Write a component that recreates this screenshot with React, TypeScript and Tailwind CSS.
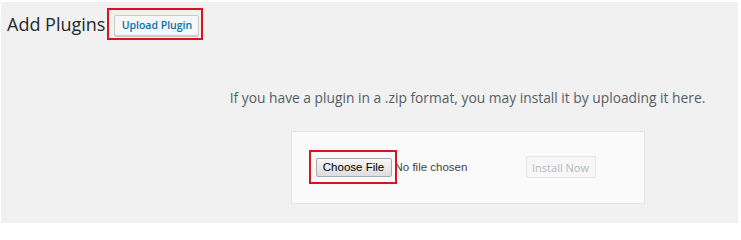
import React from "react";

const sans = { fontFamily: '"Open Sans", "Noto Sans", sans-serif' };

function RedFrame({ children, className = "" }: { children: React.ReactNode; className?: string }) {
  return <div className={`border-2 border-[#d9141e] ${className}`}>{children}</div>;
}

export default function App() {
  return (
    <div className="w-[741px] h-[225px] bg-white pt-[2px] pl-[1px] pr-[3px] pb-[2px]" style={sans}>
      <div className="h-full bg-[#f1f1f1] flex flex-col">
        {/* page title */}
        <div className="flex items-center pl-[6px] pt-[6px]">
          <h1 className="text-[18px] leading-[28px] text-[#23282d] font-normal">Add Plugins</h1>
          <RedFrame className="ml-[2px] pl-[5px] pr-[2px] pt-[1px] pb-[2px]">
            <button className="h-[21px] w-[85px] border border-[#ccc] bg-[#f7f7f7] rounded-[2px] text-[10.5px] font-semibold text-[#0073aa] shadow-[0_1px_0_#ccc] leading-none">
              Upload Plugin
            </button>
          </RedFrame>
        </div>

        {/* upload area */}
        <div className="pl-[196px] flex flex-col items-center">
          <p className="mt-[49px] text-[13.8px] leading-[18px] text-[#555d66]">
            If you have a plugin in a .zip format, you may install it by uploading it here.
          </p>
          <div className="mt-[24px] w-[354px] h-[73px] border border-[#e5e5e5] bg-[#fafafa] flex items-center pl-[24px]">
            <div className="relative flex items-center w-[210px]">
              <button
                className="h-[19px] w-[76px] border border-[#a9a9a9] rounded-[2px] bg-gradient-to-b from-[#f6f6f6] to-[#dddddd] text-[11.5px] text-black leading-none"
                style={{ fontFamily: '"Liberation Sans", Arial, sans-serif' }}
              >
                Choose File
              </button>
              <span
                className="ml-[3px] text-[11.5px] text-[#444]"
                style={{ fontFamily: '"Liberation Sans", Arial, sans-serif' }}
              >
                No file chosen
              </span>
              <div className="absolute left-[-7px] top-[-8px] w-[88px] h-[34px] border-2 border-[#d9141e]" />
            </div>
            <button className="h-[22px] w-[70px] border border-[#e5e5e5] bg-[#f7f7f7] rounded-[2px] text-[11px] text-[#b4b9be] leading-none">
              Install Now
            </button>
          </div>
        </div>
      </div>
    </div>
  );
}
